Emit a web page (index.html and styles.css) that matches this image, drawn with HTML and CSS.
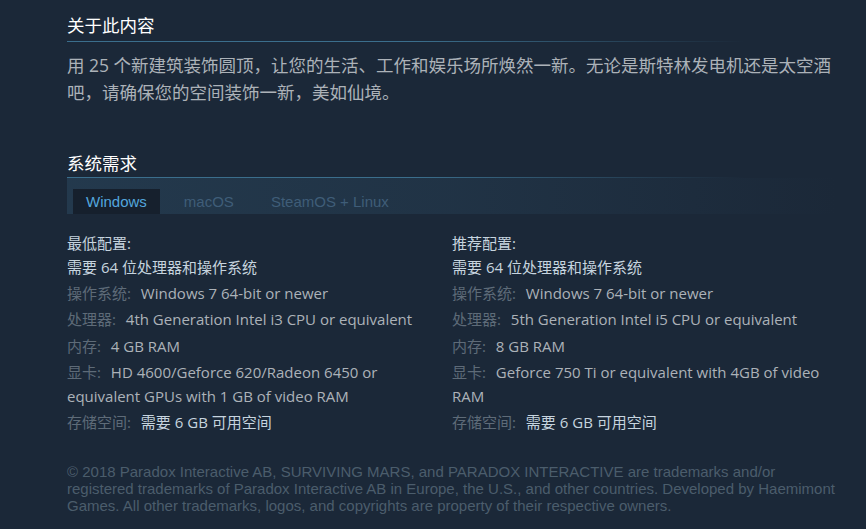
FILE: index.html
```html
<!DOCTYPE html>
<html lang="zh-CN">
<head>
<meta charset="utf-8">
<link rel="stylesheet" href="styles.css">
</head>
<body>
<div class="page">
  <section class="about">
    <h2 class="heading">关于此内容</h2>
    <p class="desc">用 25 个新建筑装饰圆顶，让您的生活、工作和娱乐场所焕然一新。无论是斯特林发电机还是太空酒吧，请确保您的空间装饰一新，美如仙境。</p>
  </section>

  <section class="sysreq">
    <h2 class="heading heading-tight">系统需求</h2>
    <div class="tabs">
      <span class="tab active">Windows</span>
      <span class="tab">macOS</span>
      <span class="tab">SteamOS + Linux</span>
    </div>
    <div class="cols">
      <div class="col">
        <div class="col-title">最低配置:</div>
        <ul class="reqs">
          <li class="bright">需要 64 位处理器和操作系统</li>
          <li><span class="lbl">操作系统:</span> Windows 7 64-bit or newer</li>
          <li><span class="lbl">处理器:</span> 4th Generation Intel i3 CPU or equivalent</li>
          <li><span class="lbl">内存:</span> 4 GB RAM</li>
          <li><span class="lbl">显卡:</span> HD 4600/Geforce 620/Radeon 6450 or equivalent GPUs with 1 GB of video RAM</li>
          <li><span class="lbl">存储空间:</span> <span class="bright">需要 6 GB 可用空间</span></li>
        </ul>
      </div>
      <div class="col">
        <div class="col-title">推荐配置:</div>
        <ul class="reqs">
          <li class="bright">需要 64 位处理器和操作系统</li>
          <li><span class="lbl">操作系统:</span> Windows 7 64-bit or newer</li>
          <li><span class="lbl">处理器:</span> 5th Generation Intel i5 CPU or equivalent</li>
          <li><span class="lbl">内存:</span> 8 GB RAM</li>
          <li><span class="lbl">显卡:</span> Geforce 750 Ti or equivalent with 4GB of video RAM</li>
          <li><span class="lbl">存储空间:</span> <span class="bright">需要 6 GB 可用空间</span></li>
        </ul>
      </div>
    </div>
  </section>

  <p class="legal">© 2018 Paradox Interactive AB, SURVIVING MARS, and PARADOX INTERACTIVE are trademarks and/or registered trademarks of Paradox Interactive AB in Europe, the U.S., and other countries. Developed by Haemimont Games. All other trademarks, logos, and copyrights are property of their respective owners.</p>
</div>
</body>
</html>
```
FILE: styles.css
```css
html, body {
  margin: 0;
  padding: 0;
  background: #1b2838;
}

body {
  font-family: "Open Sans", "Noto Sans CJK SC", sans-serif;
  color: #acb2b8;
}

.page {
  width: 770px;
  padding-left: 67px;
}

.heading {
  margin: 0;
  padding-top: 12px;
  padding-bottom: 4px;
  font-size: 17.5px;
  line-height: 26px;
  font-weight: 400;
  color: #ffffff;
  font-family: "Noto Sans CJK SC", sans-serif;
  background: linear-gradient(90deg, #3b6e8c 0%, #3b6e8c 45%, rgba(59, 110, 140, 0) 88%) left bottom / 100% 1px no-repeat;
}

.heading-tight {
  padding-top: 0;
  padding-bottom: 2px;
  margin-top: 44px;
}

.desc {
  margin: 10px 0 0;
  font-size: 17.5px;
  line-height: 27px;
  color: #acb2b8;
}

.tabs {
  display: flex;
  align-items: flex-end;
  height: 36px;
  padding-left: 6px;
  box-sizing: border-box;
  background: linear-gradient(90deg, rgba(42, 71, 94, 0.55) 0%, rgba(42, 71, 94, 0.35) 50%, rgba(42, 71, 94, 0) 100%);
  gap: 11px;
}

.tab {
  font-family: "Liberation Sans", Arial, sans-serif;
  font-size: 15px;
  line-height: 25px;
  height: 25px;
  padding: 0 13px;
  color: #3f5d78;
}

.tab.active {
  background: #16202d;
  color: #53a6dd;
}

.cols {
  display: grid;
  grid-template-columns: 385px 385px;
  margin-top: 17px;
}

.col-title {
  font-size: 15px;
  line-height: 24px;
  color: #c6d4df;
}

.reqs {
  list-style: none;
  margin: 0;
  padding: 0;
  font-size: 15px;
  line-height: 24px;
  color: #acb2b8;
}

.reqs li {
  margin-bottom: 2.2px;
}

.bright {
  color: #c6d4df;
}

.lbl {
  color: #5e6b78;
  margin-right: 6px;
}

.legal {
  margin: 27px 0 0;
  font-family: "Liberation Sans", Arial, sans-serif;
  font-size: 15px;
  line-height: 17px;
  color: #4b5d6c;
}
```
